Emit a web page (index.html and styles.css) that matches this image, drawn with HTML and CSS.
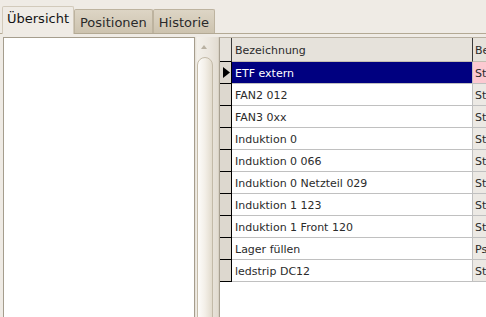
FILE: index.html
```html
<!DOCTYPE html>
<html lang="de">
<head>
  <meta charset="UTF-8" />
  <title>Artikel</title>
  <link rel="stylesheet" href="styles.css">
</head>
<body>
  <div class="tabs">
    <div class="tab active">Übersicht</div>
    <div class="tab">Positionen</div>
    <div class="tab">Historie</div>
  </div>

  <div class="panel">
    <div class="list"></div>

    <div class="scroll">
      <span class="arrow"></span>
      <div class="thumb"></div>
    </div>

    <div class="grid">
      <table>
        <tr class="head">
          <th class="rowhead"></th>
          <th class="name">Bezeichnung</th>
          <th class="desc">Be</th>
        </tr>
        <tr class="selected">
          <td class="rowhead">
            <svg width="8" height="11" viewBox="0 0 8 11"><polygon points="1,0 8,5.5 1,11" fill="#000"/></svg>
          </td>
          <td class="name">ETF extern</td>
          <td class="desc pink">St</td>
        </tr>
        <tr>
          <td class="rowhead"></td>
          <td class="name">FAN2 012</td>
          <td class="desc">St</td>
        </tr>
        <tr>
          <td class="rowhead"></td>
          <td class="name">FAN3 0xx</td>
          <td class="desc">St</td>
        </tr>
        <tr>
          <td class="rowhead"></td>
          <td class="name">Induktion 0</td>
          <td class="desc">St</td>
        </tr>
        <tr>
          <td class="rowhead"></td>
          <td class="name">Induktion 0 066</td>
          <td class="desc">St</td>
        </tr>
        <tr>
          <td class="rowhead"></td>
          <td class="name">Induktion 0 Netzteil 029</td>
          <td class="desc">St</td>
        </tr>
        <tr>
          <td class="rowhead"></td>
          <td class="name">Induktion 1 123</td>
          <td class="desc">St</td>
        </tr>
        <tr>
          <td class="rowhead"></td>
          <td class="name">Induktion 1 Front 120</td>
          <td class="desc">St</td>
        </tr>
        <tr>
          <td class="rowhead"></td>
          <td class="name">Lager füllen</td>
          <td class="desc">Ps</td>
        </tr>
        <tr>
          <td class="rowhead"></td>
          <td class="name">ledstrip DC12</td>
          <td class="desc">St</td>
        </tr>
      </table>
    </div>
  </div>
</body>
</html>
```

FILE: styles.css
```css
* {
  box-sizing: border-box;
}

html, body {
  height: 100%;
}

body {
  margin: 0;
  overflow: hidden;
  font-family: "DejaVu Sans", sans-serif;
  background-color: #efebe5;
  color: #1e1e1e;
}

.tabs {
  display: flex;
  align-items: flex-end;
  height: 33px;
  padding-left: 2px;
}

.tab {
  height: 24px;
  padding: 0 5px 0 5px;
  font-size: 13px;
  line-height: 26px;
  color: #2a2a2a;
  border: 1px solid #bdb39f;
  border-bottom: none;
  border-radius: 2px 2px 0 0;
  background: linear-gradient(#ddd5c5, #cdc3af);
}

.tab.active {
  height: 28px;
  padding: 0 4px;
  line-height: 24px;
  color: #141414;
  background: #efebe5;
  border-color: #d2cabb;
  position: relative;
  top: 1px;
}

.panel {
  display: flex;
  height: calc(100% - 33px);
  padding: 3px 0 0 3px;
  border-top: 1px solid #b3a994;
}

.list {
  width: 192px;
  flex-shrink: 0;
  background-color: #fff;
  border: 1px solid #a59d8d;
  border-bottom: none;
}

.scroll {
  position: relative;
  width: 24px;
  flex-shrink: 0;
  background: linear-gradient(90deg, #e4ded3 0, #f3f0ea 2px, #ece7df 60%, #e2dcd1 100%);
  border-right: 1px solid #d8d1c4;
}

.arrow {
  position: absolute;
  left: 6px;
  top: 8px;
  width: 0;
  height: 0;
  border-left: 3px solid transparent;
  border-right: 3px solid transparent;
  border-bottom: 4px solid #b9b1a2;
}

.thumb {
  position: absolute;
  left: 2px;
  top: 20px;
  bottom: -10px;
  width: 16px;
  border: 1px solid #c3baa8;
  border-radius: 8px 8px 0 0;
  background: linear-gradient(90deg, #fdfcfa, #f3efe8 50%, #e2dbcd);
}

.grid {
  flex: 1;
  overflow: hidden;
  background-color: #fff;
  border-left: 1px solid #a8a091;
  border-top: 1px solid #b9b1a2;
}

table {
  border-collapse: separate;
  border-spacing: 0;
  font-size: 11px;
  table-layout: fixed;
  width: 266px;
}

th, td {
  padding: 2px 0 0 3px;
  text-align: left;
  font-weight: normal;
  white-space: nowrap;
  overflow: hidden;
  color: #2b2b2b;
  border-right: 1px solid #c0c0c0;
  border-bottom: 1px solid #c0c0c0;
  height: 22px;
}

.head th {
  height: 24px;
  background: #e6e2db;
  border-bottom: 1px solid #c4bdb1;
  border-right: 1px solid #3a3a3a;
}

.rowhead {
  width: 12px;
  padding: 0;
  background: #ddd8cf;
  border-right: 1px solid #000;
  border-bottom: 1px solid #000;
}

.head .rowhead {
  border-bottom: 1px solid #000;
}

.rowhead svg {
  display: block;
  margin-left: 2px;
}

.name {
  width: 241px;
}

.desc {
  width: 13px;
  padding-left: 2px;
  border-right: none;
  background: #ece9e4;
}

.head .desc {
  background: #e6e2db;
  border-right: none;
}

.desc.pink {
  background: #fcc9d1;
}

.selected .name {
  background: #000080;
  color: #fff;
}
```
